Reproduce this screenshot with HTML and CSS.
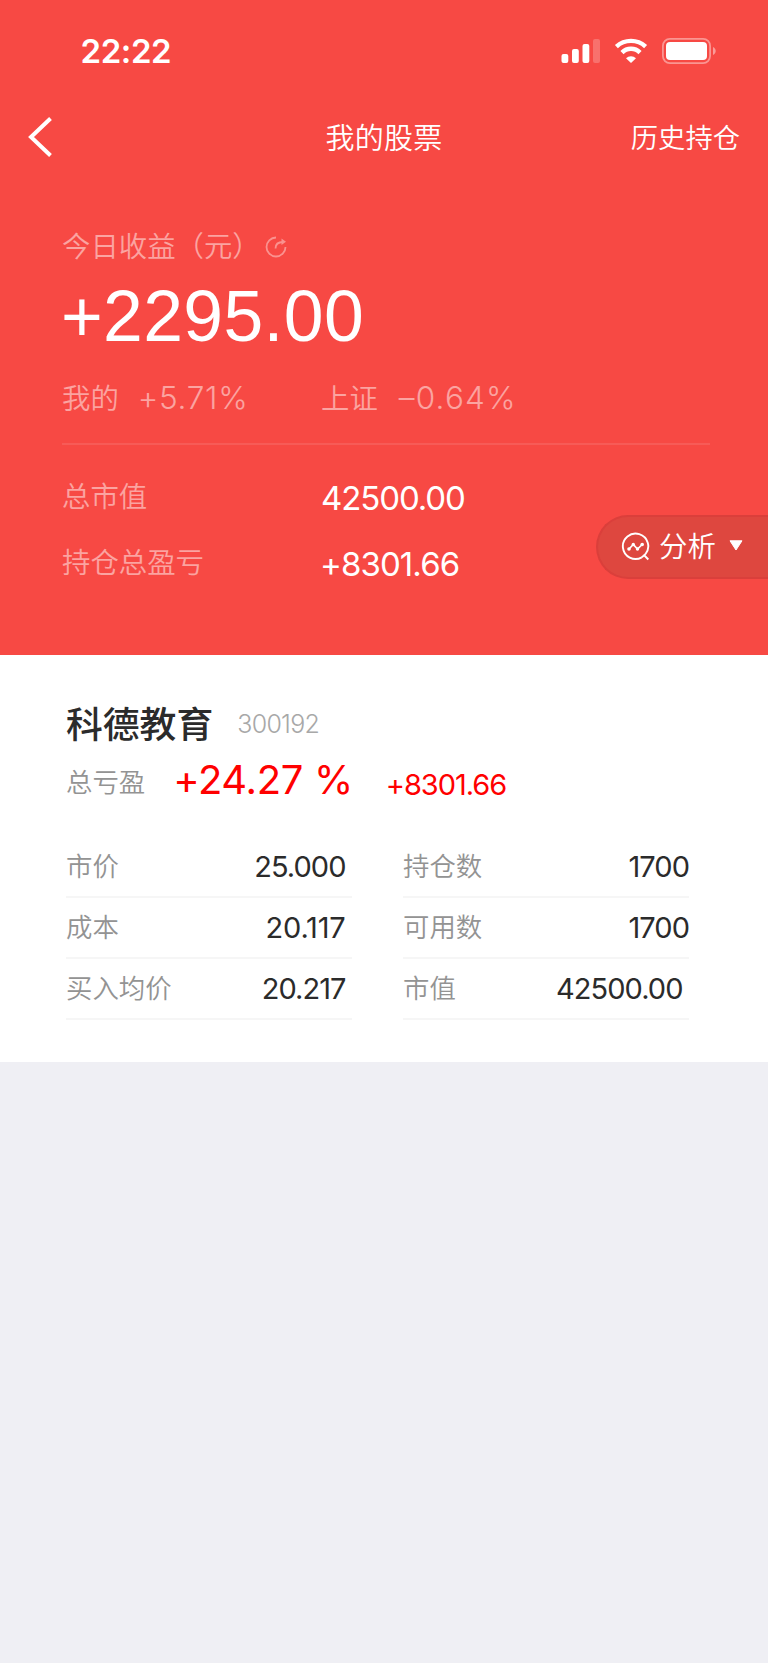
FILE: index.html
```html
<!DOCTYPE html>
<html lang="zh-CN">
<head>
<meta charset="utf-8">
<title>我的股票</title>
<link rel="stylesheet" href="styles.css">
</head>
<body>
<div class="app">
  <section class="hero">
    <div class="status">
      <span class="clock">22:22</span>
      <svg class="status-icons" width="160" height="28" viewBox="0 0 160 28">
        <g fill="#fff">
          <rect x="1.500" y="17" width="6.800" height="9" rx="2"/>
          <rect x="12" y="12" width="6.800" height="14" rx="2"/>
          <rect x="22.500" y="7" width="6.800" height="19" rx="2"/>
          <rect x="33" y="2" width="7" height="24" rx="2" opacity=".22"/>
          <path d="M71 26l-5-4.800a7.300 7.300 0 0 1 10 0z"/>
          <rect x="106" y="5" width="41" height="18" rx="4"/>
          <path d="M153 10v8c3.600-1.600 3.600-6.400 0-8z" opacity=".45"/>
        </g>
        <g fill="none" stroke="#fff" stroke-width="4.400">
          <path d="M56.400 9.600a21.600 21.600 0 0 1 29.200 0"/>
          <path d="M62 15.600a12.500 12.500 0 0 1 18 0"/>
        </g>
        <rect x="102.900" y="1.900" width="47.200" height="24.200" rx="7" fill="none" stroke="#fff" stroke-width="1.800" opacity=".42"/>
      </svg>
    </div>
    <header class="nav">
      <svg class="back" width="24" height="42" viewBox="0 0 24 42"><path d="M22.500 2.500L3 21l19.500 18.500" fill="none" stroke="#fff" stroke-width="4"/></svg>
      <h1 class="title">我的股票</h1>
      <a class="history">历史持仓</a>
    </header>
    <div class="today">
      <div class="today-label"><span>今日收益（元）</span>
        <svg class="refresh" width="22" height="22" viewBox="0 0 22 22"><g fill="none" stroke="#fff" stroke-width="1.800"><path d="M11 1.500A9.500 9.500 0 1 0 20.500 11"/><path d="M10.500 12.500c0-4 2.500-6.500 7.500-6.500"/></g><path d="M16.500 2.500l4.500 3.200-4.500 3.300z" fill="#fff"/></svg>
      </div>
      <div class="today-amount">+2295.00</div>
      <div class="rates">
        <div class="rate"><span>我的</span><span class="rate-value mine">+5.71%</span></div>
        <div class="rate"><span>上证</span><span class="rate-value index">–0.64%</span></div>
      </div>
    </div>
    <dl class="totals">
      <div class="total"><dt>总市值</dt><dd class="worth">42500.00</dd></div>
      <div class="total"><dt>持仓总盈亏</dt><dd class="gain">+8301.66</dd></div>
    </dl>
    <div class="analysis">
      <svg width="30" height="30" viewBox="0 0 30 30"><g fill="none" stroke="#fff" stroke-width="1.900"><path d="M20.800 25.300A12.700 12.700 0 1 1 24.200 22.500M22.500 22.500l4.800 5M24.200 22.500l-3.400 2.800"/><path d="M8 17l4.300-4.500 4.200 4.500 4.700-4.500" stroke-width="1.700"/></g><g fill="#fff"><circle cx="8" cy="17" r="1.800"/><circle cx="12.300" cy="12.500" r="1.700"/><circle cx="16.500" cy="17" r="1.700"/><circle cx="21.200" cy="12.500" r="1.800"/></g></svg>
      <span class="analysis-text">分析</span>
      <svg class="caret" width="14" height="11" viewBox="0 0 14 11"><path d="M1 .800h12L7 10z" fill="#fff" stroke="#fff" stroke-linejoin="round"/></svg>
    </div>
  </section>
  <section class="holding">
    <div class="stock"><h2 class="name">科德教育</h2><span class="code">300192</span></div>
    <div class="profit"><span class="label">总亏盈</span><span class="percent">+24.27 %</span><span class="amount">+8301.66</span></div>
    <div class="grid">
      <div class="cell"><span class="label">市价</span><span class="value short price">25.000</span></div>
      <div class="cell"><span class="label">持仓数</span><span class="value count">1700</span></div>
      <div class="cell"><span class="label">成本</span><span class="value short cost">20.117</span></div>
      <div class="cell"><span class="label">可用数</span><span class="value count">1700</span></div>
      <div class="cell"><span class="label">买入均价</span><span class="value short average">20.217</span></div>
      <div class="cell"><span class="label">市值</span><span class="value short market">42500.00</span></div>
    </div>
  </section>
</div>
</body>
</html>
```
FILE: styles.css
```css
* { box-sizing: border-box; }
body { margin: 0; background: #efeff4; font-family: Inter, "Noto Sans CJK SC", sans-serif; font-weight: 350; }
h1, h2, dl, dd { margin: 0; font-weight: inherit; }
.app { width: 768px; min-height: 1663px; background: #efeff4; }
.hero { position: relative; height: 655px; background: #f74944; color: #fff; }
.status { display: flex; justify-content: space-between; height: 100px; padding: 37px 48px 0 80.500px; }
.clock { font-size: 33px; line-height: 29px; font-weight: 600; letter-spacing: -.4px; }
.nav { display: grid; grid-template-columns: 1fr auto 1fr; align-items: center; height: 74px; padding: 0 28px; }
.back { display: block; }
.title { padding-top: 3px; font-size: 29px; line-height: 40px; font-weight: 350; letter-spacing: .3px; }
.history { justify-self: end; padding-top: 3px; font-size: 27.300px; line-height: 40px; }
.today { height: 271px; margin: 0 58px 0 62px; padding-top: 53px; border-bottom: 2px solid rgba(255,255,255,.1); }
.today-label { display: flex; align-items: center; height: 40px; line-height: 40px; font-size: 28.400px; color: rgba(255,255,255,.5); }
.today-label span { height: 40px; }
.refresh { margin-left: 4px; opacity: .4; }
.today-amount { height: 111px; margin-left: -1px; font: 71.500px/98px "Liberation Sans", Arial, sans-serif; letter-spacing: .35px; }
.rates { display: flex; height: 40px; line-height: 40px; font-size: 28.400px; color: rgba(255,255,255,.5); }
.rate { display: flex; width: 259px; line-height: 42px; }
.rate-value { margin-left: 19px; font-size: 31.500px; line-height: 40px; font-weight: 300; letter-spacing: .7px; }
.index { margin-left: 21px; letter-spacing: 1.200px; }
.totals { padding: 30px 62px 0; }
.total { display: flex; height: 66px; line-height: 44px; font-size: 28.400px; }
.total dt { width: 259px; color: rgba(255,255,255,.5); }
.total dd { font-size: 33px; line-height: 47px; font-weight: 400; letter-spacing: -1.100px; }
.total .gain { margin-left: -1px; letter-spacing: -.9px; }
.analysis { position: absolute; top: 515px; right: 0; display: flex; align-items: center; width: 172px; height: 64px; padding-left: 23px; background: #de473f; border: 2px solid #da3f3b; border-right: 0; border-radius: 32px 0 0 32px; }
.analysis-text { margin: -6px 0 0 8px; font-size: 28.400px; }
.caret { margin: -3px 0 0 13px; }
.holding { height: 407px; padding: 44px 78px 0 66px; background: #fff; color: #2b2b2b; }
.stock { display: flex; align-items: center; height: 50px; }
.name { margin-top: -4px; font-size: 36.800px; font-weight: 500; }
.code { margin-left: 24px; font-size: 25px; font-weight: 300; letter-spacing: -.7px; color: #a8a8a8; }
.profit { display: flex; height: 66px; line-height: 66px; }
.label { font-size: 26.400px; color: #939393; }
.percent { margin: -2px 0 0 28px; font-size: 40px; font-weight: 400; letter-spacing: -.35px; color: #f00; }
.amount { margin: 3px 0 0 33px; font-size: 29px; font-weight: 400; letter-spacing: -1.050px; color: #f00; }
.grid { display: grid; grid-template-columns: 286px 286px; column-gap: 51px; grid-auto-rows: 61.300px; padding-top: 21.600px; }
.cell { display: flex; justify-content: space-between; border-bottom: 2px solid #f6f6f6; line-height: 60px; }
.cell .label { margin-top: -1px; }
.value { font-size: 29px; font-weight: 400; letter-spacing: -.95px; }
.short { padding-right: 6.500px; }
.count { padding-right: 0; }
.cost { letter-spacing: -.2px; }
```
